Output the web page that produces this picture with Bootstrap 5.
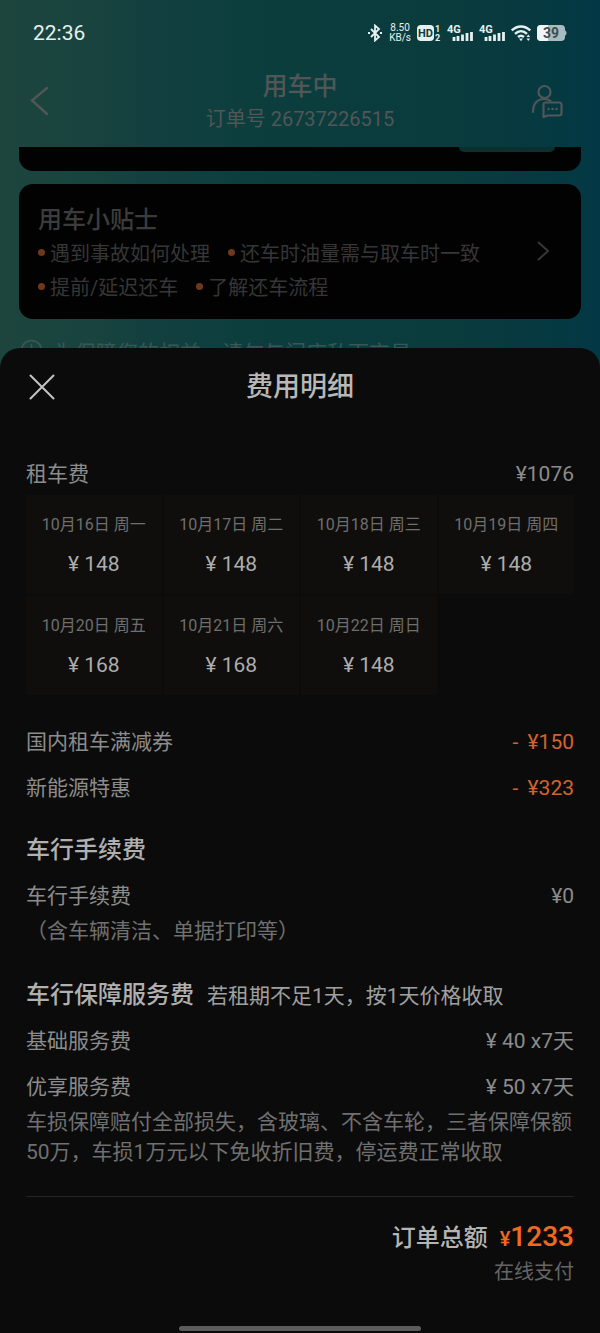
<!DOCTYPE html>
<html lang="zh-CN" data-bs-theme="dark">
<head>
<meta charset="utf-8">
<meta name="viewport" content="width=device-width, initial-scale=1">
<title>费用明细</title>
<link href="https://cdn.jsdelivr.net/npm/bootstrap@5.3.0/dist/css/bootstrap.min.css" rel="stylesheet">
<style>
  body { font-family: Roboto, "Noto Sans CJK SC", sans-serif; font-size: 21px; line-height: 30px; color: #8c8c8c; min-height: 100vh;
    background: linear-gradient(90deg, #1d453e 0, #18433e 16%, #13403f 24%, #0d3e3e 40%, #0a3b3d 75%, #053941 93%, #033745 100%) #0b0b0b; }
  a { color: inherit; text-decoration: none; }
  svg { display: block; flex: none; }
  .icon-btn { background: none; border: 0; padding: 0; color: inherit; }
  .status-bar { height: 66px; padding: 0 33px; color: #e6f0ef; }
  .status-icons { gap: 6px; }
  .net-speed { font-size: 10px; line-height: 10px; }
  .order-bar { height: 81px; padding: 0 37px 8px 30px; color: #515656; display: grid; grid-template-columns: 32px 1fr 32px; align-items: center; }
  .order-head { padding-left: 7px; }
  .order-title { font-size: 25px; line-height: 32px; color: #515656; }
  .order-no { font-size: 20px; line-height: 32px; }
  .panel { background: #020202; color: #363636; margin: 0 19px; border-radius: 14px; }
  .panel-end { height: 24px; border-radius: 0 0 14px 14px; padding-right: 26px; }
  .panel-action { width: 96px; height: 5px; border-radius: 0 0 8px 8px; background: #0b302f; }
  .tips { margin-top: 13px; padding: 19px 28px 14px 19px; }
  .tips-title { font-size: 24px; line-height: 34px; color: #3c3c3c; }
  .tips-row { font-size: 20px; line-height: 34px; column-gap: 18px; }
  .tips-row a::before { content: ""; display: inline-block; width: 7px; height: 7px; border-radius: 50%; background: #6d381d; margin-right: 5px; vertical-align: 5px; }
  .notice { padding: 20px 20px 0; color: #3a5757; gap: 11px; }
  .notice p { line-height: 28px; }
  .sheet { position: relative; background: #0b0b0b; border-radius: 20px 20px 0 0; margin-top: -19px; padding: 19px 26px 2px; }
  .sheet-title { font-size: 27px; line-height: 40px; color: #b8b8b8; }
  .sheet-head { display: grid; grid-template-columns: 32px 1fr 32px; margin-bottom: 44px; }
  .close-btn { color: #c4c4c4; padding-left: 3px; }
  .days { display: grid; grid-template-columns: repeat(4, 1fr); gap: 2px; margin-top: -2px; }
  .day { background: #0f0e0c; height: 99px; padding-top: 15px; text-align: center; }
  .day-date { font-size: 16px; color: #6e6e6e; }
  .day-price { margin-top: 9px; color: #adadad; }
  .fee { display: flex; justify-content: space-between; line-height: 46px; }
  .fee-off { color: #d4632b; }
  .medium { font-weight: 500; }
  .section-title { font-size: 24px; line-height: 46px; color: #b0b0b0; }
  .section-row { margin-top: 26px; }
  .section-note { color: #a0a0a0; margin-left: 13px; }
  .fee-desc { color: #707070; margin: -3px 0 0; }
  .rule { height: 1px; background: #242424; border: 0; opacity: 1; margin: 29px 0 20px; }
  .total { font-size: 24px; line-height: 40px; color: #b4b4b4; gap: 12px; }
  .total-amount { font-size: 28px; color: #ee6a20; }
  .total-amount small { font-size: 20px; }
  .pay-way { font-size: 20px; line-height: 26px; color: #666; }
  .home-bar { width: 44%; height: 5px; border-radius: 3px; background: #5c5c5c; margin: 41px auto 0; }
</style>
</head>
<body>
<div class="status-bar d-flex align-items-center justify-content-between">
  <time>22:36</time>
  <div class="status-icons d-flex align-items-center">
    <svg width="16" height="18" viewBox="0 0 16 18" fill="none" stroke="currentColor" stroke-width="1.8" aria-hidden="true"><path d="M4 5l8 8-4 3.500V1.500L12 5l-8 8"/><path d="M1 9h2M13 9h2" stroke-width="2"/></svg>
    <div class="net-speed text-center"><div>8.50</div><div>KB/s</div></div>
    <svg width="24" height="18" viewBox="0 0 24 18" aria-hidden="true"><rect y="1" width="17" height="16" rx="4" fill="currentColor"/><text x="8.500" y="13" text-anchor="middle" font-size="11" font-weight="700" fill="#0b3d3e">HD</text><text x="18" y="8" font-size="9" font-weight="700" fill="currentColor">1</text><text x="18" y="17" font-size="9" font-weight="700" fill="currentColor">2</text></svg>
    <svg width="26" height="18" viewBox="0 0 26 18" fill="none" stroke="currentColor" aria-hidden="true"><text x="0" y="9" font-size="11" font-weight="700" fill="currentColor" stroke="none">4G</text><path d="M7 17v-4M11 17v-5M15.500 17v-6.500M20 17v-8M24.500 17v-9" stroke-width="2.800"/></svg>
    <svg width="26" height="18" viewBox="0 0 26 18" fill="none" stroke="currentColor" aria-hidden="true"><text x="0" y="9" font-size="11" font-weight="700" fill="currentColor" stroke="none">4G</text><path d="M7 17v-4M11 17v-5M15.500 17v-6.500M20 17v-8M24.500 17v-9" stroke-width="2.800"/></svg>
    <svg width="20" height="18" viewBox="0 0 20 18" fill="none" stroke="currentColor" stroke-width="2.400" aria-hidden="true"><path d="M.8 6.500c5.400-5.300 13-5.300 18.400 0M4 9.800c3.600-3.500 8.400-3.500 12 0M7 13c1.800-1.600 4.200-1.600 6 0"/><path d="M8 14.500h4l-2 2.700zM15.500 13l1.800-2.500 1.800 2.500zM15.500 14.500l1.800 2.500 1.800-2.500z" fill="currentColor" stroke="none"/></svg>
    <svg width="30" height="18" viewBox="0 0 30 18" aria-hidden="true"><rect y="1" width="28" height="16" rx="4" fill="#a8bcbf"/><path d="M4 1h7v16H4a4 4 0 0 1-4-4V5a4 4 0 0 1 4-4z" fill="#f1f5f5"/><path d="M28 6.500c2 .5 2 4.500 0 5z" fill="#a8bcbf"/><text x="14" y="14" text-anchor="middle" font-size="14" font-weight="700" fill="#3e4d50">39</text></svg>
  </div>
</div>
<header class="order-bar">
  <button class="icon-btn mb-1" type="button" aria-label="返回"><svg width="20" height="30" viewBox="0 0 20 30" fill="none" stroke="currentColor" stroke-width="2.400" stroke-linecap="round"><path d="M17 2L2 14.500 17 28"/></svg></button>
  <div class="order-head text-center">
    <h1 class="order-title medium mb-0">用车中</h1>
    <div class="order-no">订单号 26737226515</div>
  </div>
  <button class="icon-btn mb-1" type="button" aria-label="联系客服"><svg width="32" height="34" viewBox="0 0 32 34" fill="none" stroke="currentColor" stroke-width="2.200" stroke-linecap="round" stroke-linejoin="round"><circle cx="13.500" cy="8" r="6"/><path d="M2 28c0-8 4-13 11-13 3 0 5 .7 6.500 1.800"/><path d="M14.500 18.500H28a2.500 2.500 0 0 1 2.500 2.500v8a2.500 2.500 0 0 1-2.500 2.500H16.500L12.500 33V20.500a2 2 0 0 1 2-2z"/><path d="M17.500 25h.1M21.500 25h.1M25.500 25h.1" stroke-width="2.400"/></svg></button>
</header>
<main>
  <div class="panel panel-end d-flex justify-content-end"><div class="panel-action"></div></div>
  <section class="panel tips">
    <h2 class="tips-title medium mb-0">用车小贴士</h2>
    <div class="d-flex justify-content-between">
      <div>
        <div class="tips-row d-flex flex-wrap"><a href="#">遇到事故如何处理</a><a href="#">还车时油量需与取车时一致</a></div>
        <div class="tips-row d-flex flex-wrap"><a href="#">提前/延迟还车</a><a href="#">了解还车流程</a></div>
      </div>
      <svg class="mt-1 me-1" width="12" height="20" viewBox="0 0 12 20" fill="none" stroke="currentColor" stroke-width="2" aria-hidden="true"><path d="M1 1l10 9-10 9"/></svg>
    </div>
  </section>
  <div class="notice d-flex">
    <svg width="23" height="23" viewBox="0 0 23 23" fill="none" stroke="currentColor" stroke-width="1.600" aria-hidden="true"><circle cx="11.500" cy="11.500" r="10"/><path d="M11.500 5v8M11.500 15v2"/></svg>
    <p class="mb-0 text-nowrap">为保障您的权益，请勿与门店私下交易</p>
  </div>
</main>
<section class="sheet" aria-labelledby="sheet-title">
  <div class="sheet-head">
    <button class="icon-btn close-btn" type="button" aria-label="关闭"><svg width="26" height="26" viewBox="0 0 26 26" fill="none" stroke="currentColor" stroke-width="2" stroke-linecap="round"><path d="M1.500 1.500l23 23M24.500 1.500l-23 23"/></svg></button>
    <h2 id="sheet-title" class="sheet-title medium text-center mb-0">费用明细</h2>
  </div>
  <div class="fee"><span>租车费</span><span>¥1076</span></div>
  <div class="days">
    <div class="day"><div class="day-date">10月16日 周一</div><div class="day-price">¥ 148</div></div>
    <div class="day"><div class="day-date">10月17日 周二</div><div class="day-price">¥ 148</div></div>
    <div class="day"><div class="day-date">10月18日 周三</div><div class="day-price">¥ 148</div></div>
    <div class="day"><div class="day-date">10月19日 周四</div><div class="day-price">¥ 148</div></div>
    <div class="day"><div class="day-date">10月20日 周五</div><div class="day-price">¥ 168</div></div>
    <div class="day"><div class="day-date">10月21日 周六</div><div class="day-price">¥ 168</div></div>
    <div class="day"><div class="day-date">10月22日 周日</div><div class="day-price">¥ 148</div></div>
  </div>
  <div class="fee mt-4"><span>国内租车满减券</span><span class="fee-off"><span class="me-1">-</span> ¥150</span></div>
  <div class="fee"><span>新能源特惠</span><span class="fee-off"><span class="me-1">-</span> ¥323</span></div>
  <h3 class="section-title medium mt-3 mb-0">车行手续费</h3>
  <div class="fee"><span>车行手续费</span><span>¥0</span></div>
  <p class="fee-desc">（含车辆清洁、单据打印等）</p>
  <div class="section-row d-flex align-items-baseline">
    <h3 class="section-title medium mb-0">车行保障服务费</h3>
    <span class="section-note">若租期不足1天，按1天价格收取</span>
  </div>
  <div class="fee"><span>基础服务费</span><span>¥ 40 x7天</span></div>
  <div class="fee"><span>优享服务费</span><span>¥ 50 x7天</span></div>
  <p class="fee-desc">车损保障赔付全部损失，含玻璃、不含车轮，三者保障保额50万，车损1万元以下免收折旧费，停运费正常收取</p>
  <hr class="rule">
  <div class="total d-flex justify-content-end align-items-baseline"><span class="medium">订单总额</span><span class="total-amount medium"><small>¥</small>1233</span></div>
  <div class="pay-way text-end">在线支付</div>
  <div class="home-bar"></div>
</section>
<script src="https://cdn.jsdelivr.net/npm/bootstrap@5.3.0/dist/js/bootstrap.bundle.min.js"></script>
</body>
</html>
